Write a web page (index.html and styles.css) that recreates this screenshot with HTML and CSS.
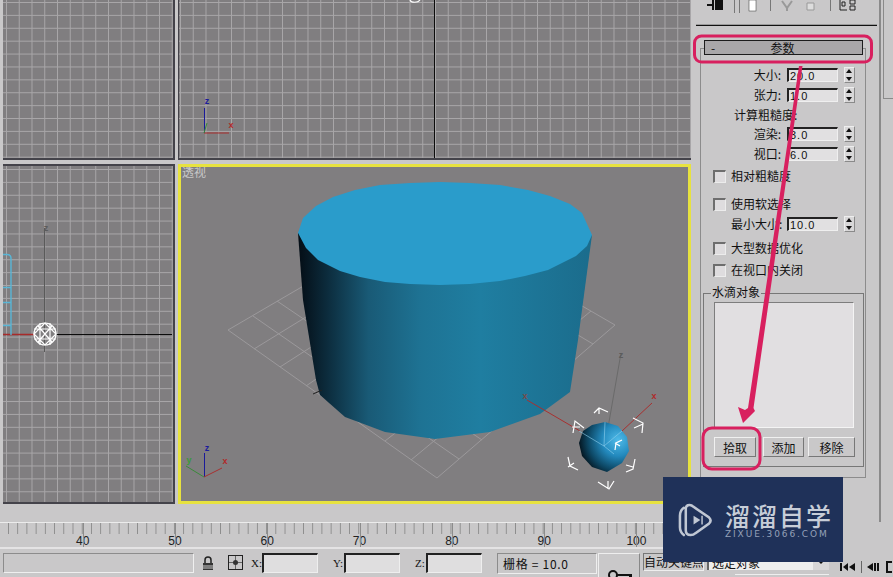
FILE: index.html
```html
<!DOCTYPE html>
<html lang="zh">
<head>
<meta charset="utf-8">
<title>3ds Max 水滴网格</title>
<link rel="stylesheet" href="styles.css">
</head>
<body>
<div class="app">
  <div class="main">
    <div class="views">
      <div class="vp vp-tl"></div>
      <div class="vp vp-tr">
        <svg class="fill" viewBox="179 0 512 158">
          <line x1="434.5" y1="0" x2="434.5" y2="158" class="black"/>
          <path d="M410 0c1 3 8 3 10 0" class="white"/>
          <line x1="204.500" y1="108" x2="204.500" y2="133" stroke="#1a1a9a"/>
          <line x1="204" y1="133" x2="229" y2="133" stroke="#a82a2a"/>
          <line x1="204" y1="133" x2="207" y2="123" stroke="#3a8a3a"/>
          <text x="207" y="104" class="ax az">z</text>
          <text x="231" y="128" class="ax ax-r">x</text>
        </svg>
      </div>
      <div class="vp vp-bl">
        <svg class="fill" viewBox="3 166 170 336">
          <line x1="44.500" y1="228" x2="44.500" y2="352" stroke="#5a5a5a"/>
          <text x="46" y="231" class="ax ax-g">z</text>
          <line x1="3" y1="334.500" x2="34" y2="334.500" stroke="#a82a2a" stroke-width="1.500"/>
          <line x1="55" y1="334.500" x2="172" y2="334.500" class="black"/>
          <path d="M3 254.500h4q4 0 4 4V335M3 287.500h8M3 302.500h8M3 325.500h8" class="cyan"/>
          <g class="white">
            <circle cx="45" cy="334" r="11"/>
            <path d="M34 329h22M34 339h22M40 323v22M50 323v22M34 334l11-11 11 11-11 11zM38 326l14 16M52 326l-14 16"/>
          </g>
        </svg>
      </div>
      <div class="vp vp-persp">
        <svg class="fill" viewBox="178 164 513 340">
          <defs>
            <linearGradient id="body" gradientUnits="userSpaceOnUse" x1="298" y1="0" x2="592" y2="0">
              <stop offset="0" stop-color="#040d15"/>
              <stop offset="0.1" stop-color="#0c2c3d"/>
              <stop offset="0.24" stop-color="#195a76"/>
              <stop offset="0.42" stop-color="#1e7394"/>
              <stop offset="0.62" stop-color="#1f7ea1"/>
              <stop offset="1" stop-color="#1b6c8c"/>
            </linearGradient>
            <radialGradient id="ball" gradientUnits="userSpaceOnUse" cx="618" cy="440" r="40">
              <stop offset="0" stop-color="#4fbbe9"/>
              <stop offset="0.4" stop-color="#2389bd"/>
              <stop offset="0.75" stop-color="#0d4764"/>
              <stop offset="1" stop-color="#04121b"/>
            </radialGradient>
          </defs>
          <path class="floor" d="M228 330L437 478M253 316L459 459M277 301L482 440M302 287L504 421M327 273L526 402M351 258L548 383M376 244L571 363M400 229L593 344M425 215L615 325M228 330L425 215M254 349L449 229M280 367L473 243M306 386L496 256M333 404L520 270M359 423L544 284M385 441L568 298M411 460L591 311M437 478L615 325"/>
          <polygon fill="url(#body)" points="298,233 303,300 316,380 320,395 345,417 385,432 435,439 490,432 540,414 570,392 578,340 592,235"/>
          <polygon fill="#2a9ccb" points="298,233 303,218 316,206 333,197 355,190 380,185 410,183 440,182 470,183 500,185 528,190 550,196 570,204 582,213 592,235 587,246 576,256 548,270 525,276 500,281 470,284 440,285 410,284 385,282 360,277 340,271 318,260 306,248"/>
          <line x1="313" y1="394" x2="322" y2="390" stroke="#222"/>
          <line x1="621" y1="353" x2="605" y2="445" stroke="#6a6a6a"/>
          <text x="621" y="358" class="ax ax-g">z</text>
          <line x1="527" y1="400" x2="580" y2="431" stroke="#a83030"/>
          <line x1="652" y1="403" x2="622" y2="431" stroke="#a83030"/>
          <text x="525" y="399" class="ax ax-dim">x</text>
          <text x="654" y="399" class="ax ax-r">x</text>
          <polygon fill="url(#ball)" points="605,422 618,426 627,437 629,451 622,463 607,472 592,467 582,456 579,443 583,431 592,425"/>
          <path d="M605 422l-1 24M604 446l-25-15M604 446l18-15M604 446l10 8" stroke="#8fd0ee" stroke-width="1" fill="none" opacity="0.6"/>
          <g class="white">
            <path d="M594 413l5-5 9 4M599 408v6"/>
            <path d="M573 433l2-12 9 7M572 427h8"/>
            <path d="M633 418l10 5-1 10M634 428l9-4"/>
            <path d="M568 457l2 9 8 4M568 467l6-4"/>
            <path d="M635 459l-2 10-7 3M626 465l7 2"/>
            <path d="M598 482l11 7 5-8M608 481v8"/>
            <path d="M615 450l1-7 6-3M615 443l5 3"/>
          </g>
          <line x1="204.500" y1="453" x2="204.500" y2="477" stroke="#1a1a9a"/>
          <line x1="204" y1="477" x2="222" y2="468" stroke="#a83030"/>
          <line x1="204" y1="477" x2="186" y2="466" stroke="#3a8a3a"/>
          <text x="207" y="451" class="ax az">z</text>
          <text x="225" y="464" class="ax ax-r">x</text>
          <text x="189" y="463" class="ax ax-green">y</text>
          <text x="182" y="177" class="vp-label">透视</text>
        </svg>
      </div>
    </div>
    <aside class="side">
      <div class="tools">
        <svg class="fill" viewBox="691 0 186 26">
          <path d="M707 5h6M713 0v10M716 0h6v9h-6zM718 2h2v5h-2z" stroke="#111" stroke-width="2" fill="none"/>
          <path d="M734.500 0v13M739.500 0v13M770.500 0v11M830.500 0v11" stroke="#777" fill="none"/>
          <rect x="749" y="0" width="7" height="11" fill="#fff" stroke="#333" stroke-width="0.500"/>
          <path d="M782 1l5 7 5-7M787 8v3" stroke="#999" stroke-width="2" fill="none"/>
          <path d="M807 3h7v7h-7z" stroke="#999" fill="#ddd"/>
          <path d="M840 0v10h7M850 0h5v4h-5zM850 6h5v4h-5zM842 2h3v4h-3z" stroke="#222" fill="none"/>
          <line x1="696" y1="25.500" x2="877" y2="25.500" stroke="#111" stroke-width="1.500"/>
        </svg>
      </div>
      <section class="rollout">
        <div class="roll-title"><span class="roll-sign">-</span><span class="roll-name">参数</span></div>
        <div class="row">
          <label class="lbl">大小:</label><span class="field">20.0</span><span class="spin"></span>
        </div>
        <div class="row">
          <label class="lbl">张力:</label><span class="field">1.0</span><span class="spin"></span>
        </div>
        <div class="row row-short"><span class="heading">计算粗糙度:</span></div>
        <div class="row">
          <label class="lbl">渲染:</label><span class="field">3.0</span><span class="spin"></span>
        </div>
        <div class="row">
          <label class="lbl">视口:</label><span class="field">6.0</span><span class="spin"></span>
        </div>
        <div class="row check gap-2"><span class="box"></span><span>相对粗糙度</span></div>
        <div class="row check gap-8"><span class="box"></span><span>使用软选择</span></div>
        <div class="row">
          <label class="lbl lbl-left">最小大小:</label><span class="field">10.0</span><span class="spin"></span>
        </div>
        <div class="row check gap-4"><span class="box"></span><span>大型数据优化</span></div>
        <div class="row check gap-2"><span class="box"></span><span>在视口内关闭</span></div>
        <fieldset class="drops">
          <legend class="drops-legend">水滴对象</legend>
          <div class="list"></div>
          <div class="btns">
            <span class="btn btn-pick">拾取</span>
            <span class="btn btn-add">添加</span>
            <span class="btn btn-del">移除</span>
          </div>
        </fieldset>
      </section>
    </aside>
  </div>
  <div class="ruler">
    <span class="num">40</span><span class="num">50</span><span class="num">60</span><span class="num">70</span><span class="num">80</span><span class="num">90</span><span class="num">100</span>
  </div>
  <div class="status">
    <div class="prompt"></div>
    <svg class="lock" viewBox="0 0 12 15"><path d="M3 7V4a3 3 0 0 1 6 0v3" fill="none" stroke="#222" stroke-width="1.500"/><rect x="1" y="7" width="10" height="7" fill="#333"/><path d="M1 10h10M1 12h10" stroke="#ccc"/></svg>
    <svg class="snap" viewBox="0 0 15 15"><rect x="0.500" y="0.500" width="14" height="14" fill="none" stroke="#222"/><path d="M7.500 0v15M0 7.500h15" stroke="#222" stroke-width="0.600"/><circle cx="7.500" cy="7.500" r="2.500" fill="#333"/></svg>
    <span class="axis">X:</span><span class="coord"></span>
    <span class="axis axis-next">Y:</span><span class="coord"></span>
    <span class="axis axis-next">Z:</span><span class="coord"></span>
    <div class="gridbox">栅格 = 10.0</div>
    <div class="keybtn">
      <svg class="key" viewBox="0 0 24 8"><circle cx="5" cy="6" r="4" fill="none" stroke="#111" stroke-width="2"/><path d="M9 5h15v3h-3v-1h-12z" fill="#111"/></svg>
    </div>
    <div class="keycol">
      <div class="autokey">自动关键点</div>
    </div>
    <div class="dropcol">
      <div class="select"><span>选定对象</span><span class="caret"></span></div>
      <div class="below"></div>
    </div>
    <div class="nav">
      <svg class="nav-ico" viewBox="0 0 53 12"><path d="M0 2h2v8H0zM8 2v8L3 6zM15 2v8l-6-4z" fill="#111"/><path d="M21 0h1v12h-1z" fill="#666"/><path d="M33 2v8l-6-4zM34 2h2v8h-2zM37 2h2v8h-2z" fill="#111"/><path d="M52 1h-5v10h5" stroke="#111" stroke-width="2" fill="none"/></svg>
    </div>
  </div>
  <svg class="marks" viewBox="0 0 893 577">
    <rect x="694.500" y="36" width="177" height="26" rx="7"/>
    <rect x="703" y="428" width="57" height="41" rx="9"/>
    <path class="arrow" d="M799 66L802.500 66L753.500 408L755 411L743 423L738 407L745 410L748 408Z"/>
  </svg>
  <div class="mark">
    <svg class="mark-logo" viewBox="0 0 36 38">
      <path d="M6 6q-4 3-4 8v12q0 5 4 8M12 3q-4 0-4 4v22q0 5 5 5 3 0 5-2l14-10q3-3 0-6L16 5q-2-2-4-2z" fill="none" stroke="#c0c7d3" stroke-width="2.600" stroke-linecap="round"/>
      <path d="M16 14v9l7-4.500z M24 14h1.500v9H24z" fill="#c0c7d3"/>
    </svg>
    <div class="mark-text">
      <div class="mark-cn">溜溜自学</div>
      <div class="mark-en">ZIXUE.3066.COM</div>
    </div>
  </div>
</div>
</body>
</html>
```

FILE: styles.css
```css
* { box-sizing: border-box; }
html, body { margin: 0; padding: 0; }
body { font-family: "Noto Sans CJK SC", "Liberation Sans", sans-serif; font-size: 12px; color: #111; background: #c9c8c9; }

.app { position: relative; width: 893px; height: 577px; overflow: hidden; background: #c9c8c9; }
.main { display: flex; height: 522px; }

.views { display: grid; grid-template-columns: 172px 513px; grid-template-rows: 160px 340px; column-gap: 3px; row-gap: 4px; padding-left: 3px; width: 691px; }
.vp { position: relative; background-color: #807e80; overflow: hidden; }
.fill { display: block; width: 100%; height: 100%; }

.vp-tl, .vp-tr, .vp-bl {
  background-image:
    linear-gradient(90deg, #a8a6a8 1px, transparent 1px),
    linear-gradient(180deg, #a8a6a8 1px, transparent 1px);
  background-size: 12.75px 12.9px;
}
.vp-tl { border-right: 2px solid #44434a; border-bottom: 2px solid #44434a; background-position: 3px 2px; }
.vp-tr { border-bottom: 2px solid #44434a; border-left: 1px solid #44434a; background-position: 1px 2px; }
.vp-bl { border: 0 solid #44434a; border-top-width: 2px; border-right-width: 2px; border-bottom-width: 2px; background-position: 3px 3px; }
.vp-persp { isolation: isolate; outline: 3px solid #e7e23f; outline-offset: -3px; }
.vp-persp .fill { position: relative; z-index: -1; }

.black { stroke: #0c0c0c; }
.white { stroke: #fff; fill: none; stroke-width: 1.2; }
.cyan { stroke: #58b6d6; fill: none; stroke-width: 1.4; }
.floor { stroke: #9b999b; fill: none; stroke-width: 1; }
.ax { font-family: "Liberation Sans", sans-serif; font-size: 9px; font-weight: 700; text-anchor: middle; }
.az { fill: #1c1c9c; }
.ax-r { fill: #b02a2a; }
.ax-g { fill: #5c5c5c; }
.ax-dim { fill: #7a4a4a; }
.ax-green { fill: #3a9a3a; }
.vp-label { fill: #c8c8c8; font-size: 12px; font-family: "Noto Sans CJK SC", sans-serif; }

.side { width: 202px; position: relative; }
.side::before { content: ""; position: absolute; left: 188px; top: 0; bottom: 0; width: 2px; background: #8a8a8a; }
.side::after { content: ""; position: absolute; left: 192px; top: 0; width: 10px; height: 98px; border: 1px solid #8a8a8a; border-top: 0; border-right: 0; }
.tools { height: 26px; width: 186px; }

.rollout { margin: 22px 0 0 9px; width: 166px; height: 430px; border: 1px solid #8c8c8c; }
.roll-title { display: flex; align-items: center; margin: -9px 2px 10px 3px; width: 159px; height: 15px; border: 1px solid #1c1c1c; background: #a9a7a9; font-size: 12px; }
.roll-sign { width: 12px; padding-left: 6px; }
.roll-name { flex: 1; text-align: center; padding-right: 14px; }

.row { display: flex; align-items: center; height: 20px; line-height: 20px; white-space: nowrap; }
.row-short { height: 19px; }
.lbl { width: 86px; text-align: right; padding-right: 6px; }
.lbl-left { text-align: left; padding: 0 0 0 30px; }
.heading { padding-left: 33px; }
.field { width: 51px; height: 14px; line-height: 12px; background: #e1e0e1; border-top: 2px solid #222; border-left: 2px solid #222; border-right: 1px solid #efefef; border-bottom: 1px solid #efefef; font-family: "Liberation Sans", sans-serif; font-size: 11px; letter-spacing: 1px; padding-left: 1px; }
.spin { position: relative; width: 11px; height: 16px; margin-left: 6px; background: #d8d7d8; border: 1px solid #8a8a8a; border-top-color: #eee; border-left-color: #eee; }
.spin::before { content: ""; position: absolute; left: 1px; top: 1px; border: 3px solid transparent; border-top: 0; border-bottom: 4px solid #111; }
.spin::after { content: ""; position: absolute; left: 1px; bottom: 1px; border: 3px solid transparent; border-bottom: 0; border-top: 4px solid #111; }

.check { padding-left: 12px; gap: 5px; }
.box { width: 13px; height: 13px; background: #dedcde; border-top: 2px solid #6e6e6e; border-left: 2px solid #6e6e6e; border-right: 1px solid #ececec; border-bottom: 1px solid #ececec; }
.gap-2 { margin-top: 2px; }
.gap-4 { margin-top: 4px; }
.gap-8 { margin-top: 8px; }

.drops { margin: 13px 0 0 2px; padding: 0; width: 161px; height: 174px; border: 1px solid #777; position: relative; }
.drops-legend { position: absolute; left: 7px; top: -10px; padding: 0 1px; background: #c9c8c9; line-height: 16px; }
.list { margin: 8px 0 0 10px; width: 140px; height: 126px; background: #e1dfe1; border: 1px solid #7d7d7d; border-right-color: #f4f4f4; border-bottom-color: #f4f4f4; }
.btns { display: flex; margin: 9px 0 0 10px; }
.btn { height: 20px; line-height: 19px; text-align: center; background: #c9c8c9; border: 1px solid #f0f0f0; border-right-color: #777; border-bottom-color: #777; }
.btn-pick { width: 42px; }
.btn-add { width: 41px; margin-left: 7px; }
.btn-del { width: 47px; margin-left: 4px; }

.ruler { display: flex; height: 27px; width: 663px; padding-left: 36.500px; overflow: hidden; border-top: 1px solid #ececec; border-bottom: 2px solid #e4e3e4;
  background-image: linear-gradient(90deg, #8c8c8c 1px, transparent 1px);
  background-size: 9.23px 11px;
  background-position: 8px 0;
  background-repeat: repeat-x;
}
.num { position: relative; flex: none; width: 92.300px; padding-top: 11px; text-align: center; font-family: "Liberation Sans", sans-serif; font-size: 12px; line-height: 14px; color: #222; }
.num::after { content: ""; position: absolute; left: 50%; top: 0; bottom: 0; width: 1px; background: #8c8c8c; }

.status { display: flex; align-items: flex-start; height: 28px; padding: 4px 0 0 3px; }
.prompt { width: 191px; height: 20px; border: 1px solid #8c8c8c; border-right-color: #efefef; border-bottom-color: #efefef; }
.lock { width: 12px; height: 15px; margin: 3px 0 0 8px; }
.snap { width: 15px; height: 15px; margin: 2px 0 0 14px; }
.axis { width: 11px; margin-left: 8px; font-family: "Liberation Serif", serif; font-size: 11px; line-height: 20px; }
.axis-next { margin-left: 15px; }
.coord { width: 56px; height: 20px; background: #dfdedf; border-top: 2px solid #222; border-left: 2px solid #222; border-right: 1px solid #eee; border-bottom: 1px solid #eee; }
.gridbox { width: 100px; height: 21px; margin-left: 15px; padding-left: 5px; line-height: 19px; letter-spacing: 0.7px; border: 1px solid #8c8c8c; border-right-color: #eee; border-bottom-color: #eee; }
.keybtn { position: relative; width: 42px; height: 25px; margin-left: 1px; border-top: 1px solid #eee; border-left: 1px solid #eee; border-right: 1px solid #888; overflow: hidden; }
.key { position: absolute; left: 9px; top: 15px; width: 24px; height: 8px; }
.keycol { width: 61px; margin-left: 3px; }
.autokey { height: 18px; line-height: 16px; font-size: 12px; border: 1px solid #777; border-right-color: #eee; border-bottom-color: #eee; overflow: hidden; white-space: nowrap; }
.dropcol { width: 122px; margin-left: 3px; }
.select { display: flex; justify-content: space-between; align-items: center; height: 17px; padding-left: 3px; background: #eee; border-top: 1px solid #888; border-left: 2px solid #666; }
.caret { width: 16px; height: 15px; background: #d8d7d8; position: relative; }
.caret::after { content: ""; position: absolute; left: 5px; top: 6px; border: 3px solid transparent; border-bottom: 0; border-top-color: #111; }
.below { height: 3px; margin: 4px 0 0 28px; border-top: 1px solid #eee; }
.nav { margin: 8px 0 0 11px; }
.nav-ico { display: block; width: 53px; height: 12px; }

.marks { position: absolute; left: 0; top: 0; width: 893px; height: 577px; pointer-events: none; }
.marks rect { fill: none; stroke: #d8205f; stroke-width: 3; }
.arrow { fill: #d8205f; }

.mark { position: absolute; left: 663px; top: 477px; display: flex; width: 180px; height: 85px; padding: 26px 0 0 15px; background: #1f3159; }
.mark-logo { width: 35px; height: 37px; margin-top: -1px; }
.mark-text { margin-left: 12px; color: #c7cdd8; }
.mark-cn { font-size: 25px; line-height: 25px; font-weight: 500; letter-spacing: 2px; white-space: nowrap; }
.mark-en { font-family: "DejaVu Sans", sans-serif; font-size: 9px; line-height: 10px; letter-spacing: 1.9px; color: #94a0b8; white-space: nowrap; margin-top: 1px; }
```
